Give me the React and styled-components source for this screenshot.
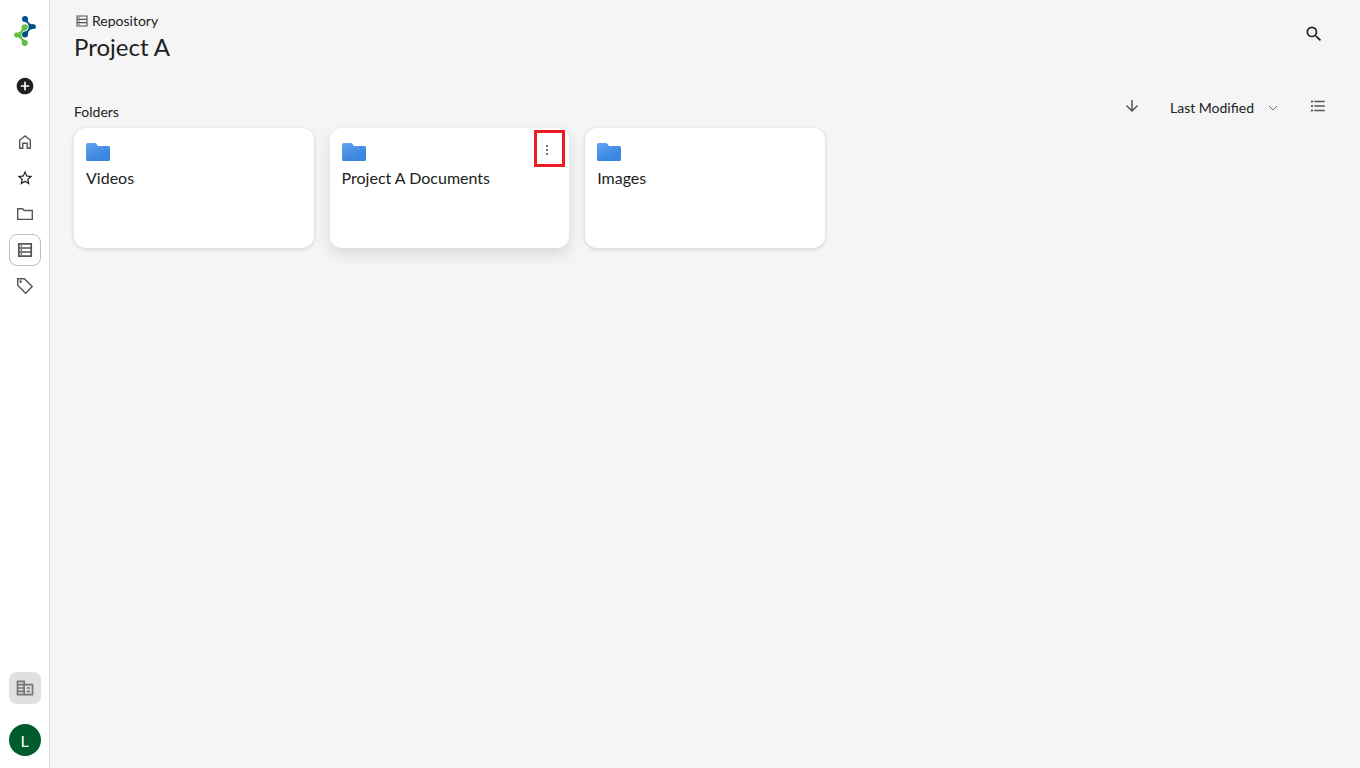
import styled, { createGlobalStyle, ThemeProvider } from "styled-components"
import {
  MdAddCircle,
  MdArrowDownward,
  MdCorporateFare,
  MdFormatListBulleted,
  MdSearch,
  MdStarBorder,
} from "react-icons/md"

const folders = [
  { id: "videos", name: "Videos" },
  { id: "documents", name: "Project A Documents", active: true },
  { id: "images", name: "Images" },
]

const theme = {
  bg: "#f5f5f5",
  surface: "#ffffff",
  text: "#212121",
  icon: "#555555",
  muted: "#757575",
  border: "#e0e0e0",
  highlight: "#ed1c24",
  avatar: "#005c2a",
}

const GlobalStyle = createGlobalStyle`
  * {
    box-sizing: border-box;
  }

  body {
    margin: 0;
    font-family: Lato, "Open Sans", sans-serif;
    color: #212121;
  }
`

const Logo = () => (
  <svg width="24" height="32" viewBox="0 0 24 32" aria-hidden="true">
    <g fill="#62c044">
      <path d="M8.7 12 C9 15.5 7.3 17.6 3.5 17.6 V22.4 C7 22.2 9.2 24.5 9 28.5 L13 25.5 C10 24.5 8.6 22.5 8.4 20 C8.4 17.5 10 15.2 14 14.5 Z" />
      <circle cx="11.7" cy="12.3" r="3.1" />
      <circle cx="3.4" cy="20" r="2.4" />
      <circle cx="11.8" cy="28" r="3" />
    </g>
    <g fill="#00508a">
      <path d="M14.6 3.5 C14.4 7.4 17 9.5 20.6 9.3 V14.1 C17 14.1 14.9 16.2 15 20 L11 17 C14 16.3 15.7 14.5 15.7 12 C15.7 9 14 7.3 10.5 6.3 Z" />
      <circle cx="12" cy="4" r="3" />
      <circle cx="20.6" cy="11.7" r="2.4" />
      <circle cx="12" cy="19.4" r="3" />
    </g>
  </svg>
)

const HomeIcon = () => (
  <LineIcon viewBox="0 0 20 20">
    <path d="M10 4 L4.7 8 V16.3 H7.8 V11.3 H12.2 V16.3 H15.3 V8 Z" />
  </LineIcon>
)

const FolderLineIcon = () => (
  <LineIcon viewBox="0 0 20 20">
    <path d="M2.7 4.7 H7.6 L9.2 6.5 H17.3 V15.4 H2.7 Z" />
  </LineIcon>
)

const RepositoryIcon = ({ $size, $weight }) => (
  <LineIcon viewBox="0 0 20 20" $size={$size} $weight={$weight}>
    <path d="M3.8 3.8 H16.2 V16.2 H3.8 Z M3.8 8 H16.2 M3.8 12 H16.2" />
    <path d="M5.6 6 H7.2 M5.6 10 H7.2 M5.6 14 H7.2" />
  </LineIcon>
)

const TagIcon = () => (
  <LineIcon viewBox="0 0 20 20">
    <path d="M2.7 2.7 H9.3 L17.2 10.6 L10.6 17.2 L2.7 9.3 Z" />
    <circle cx="5.6" cy="5.6" r="0.6" />
  </LineIcon>
)

const FolderIcon = () => (
  <svg width="24" height="24" viewBox="0 0 24 24" aria-hidden="true">
    <defs>
      <linearGradient id="folder" x1="0" y1="0" x2="0.6" y2="1">
        <stop offset="0" stopColor="#65a3f0" />
        <stop offset="0.7" stopColor="#3f8be4" />
        <stop offset="1" stopColor="#3a85df" />
      </linearGradient>
    </defs>
    <path
      fill="url(#folder)"
      d="M1.5 3 H8.8 Q9.6 3 10.2 3.7 L12 6 H22.5 Q24 6 24 7.5 V19.5 Q24 21 22.5 21 H1.5 Q0 21 0 19.5 V4.5 Q0 3 1.5 3 Z"
    />
  </svg>
)

const navItems = [
  { label: "Home", icon: <HomeIcon /> },
  { label: "Favorites", icon: <MdStarBorder size={18} /> },
  { label: "Files", icon: <FolderLineIcon /> },
  { label: "Repository", icon: <RepositoryIcon $weight={1.7} />, selected: true },
  { label: "Tags", icon: <TagIcon /> },
]

function App() {
  return (
    <ThemeProvider theme={theme}>
      <GlobalStyle />
      <Wrapper>
        <Sidebar>
          <LogoLink href="#" aria-label="Start">
            <Logo />
          </LogoLink>
          <AddButton aria-label="Add">
            <MdAddCircle size={20} />
          </AddButton>
          <Nav>
            {navItems.map((item) => (
              <NavLink
                key={item.label}
                href="#"
                aria-label={item.label}
                $selected={item.selected}
              >
                {item.icon}
              </NavLink>
            ))}
          </Nav>
          <SidebarFooter>
            <CompanyButton aria-label="Company">
              <MdCorporateFare size={20} />
            </CompanyButton>
            <Avatar aria-label="Account">L</Avatar>
          </SidebarFooter>
        </Sidebar>
        <Main>
          <Header>
            <div>
              <Breadcrumb href="#">
                <RepositoryIcon $size={16} />
                Repository
              </Breadcrumb>
              <PageTitle>Project A</PageTitle>
            </div>
            <SearchButton aria-label="Search">
              <MdSearch size={20} />
            </SearchButton>
          </Header>
          <Toolbar>
            <SectionTitle>Folders</SectionTitle>
            <Controls>
              <ToolButton aria-label="Sort direction">
                <MdArrowDownward size={18} />
              </ToolButton>
              <SortField>
                <SortSelect aria-label="Sort by">
                  <option>Last Modified</option>
                </SortSelect>
                <Chevron viewBox="0 0 10 6">
                  <path d="M1 1 L5 5 L9 1" />
                </Chevron>
              </SortField>
              <ToolButton aria-label="List view">
                <MdFormatListBulleted size={18} />
              </ToolButton>
            </Controls>
          </Toolbar>
          <FolderGrid>
            {folders.map((f) => (
              <Card key={f.id} $active={f.active}>
                <CardTop>
                  <FolderIcon />
                  {f.active && (
                    <MenuButton aria-label="More">
                      <Dots viewBox="0 0 20 20">
                        <path d="M9 5h2v2H9z M9 9h2v2H9z M9 13h2v2H9z" />
                      </Dots>
                      <Highlight />
                    </MenuButton>
                  )}
                </CardTop>
                <CardTitle>{f.name}</CardTitle>
              </Card>
            ))}
          </FolderGrid>
        </Main>
      </Wrapper>
    </ThemeProvider>
  )
}

export default App

const Wrapper = styled.div`
  display: flex;
  min-height: 100vh;
  background: ${({ theme }) => theme.bg};
`

const Sidebar = styled.aside`
  display: flex;
  flex-direction: column;
  align-items: center;
  width: 50px;
  padding: 15px 0 12px;
  background: ${({ theme }) => theme.surface};
  border-right: 1px solid ${({ theme }) => theme.border};
`

const LogoLink = styled.a`
  display: flex;
`

const IconButton = styled.button`
  display: flex;
  align-items: center;
  justify-content: center;
  flex: none;
  padding: 0;
  border: none;
  background: none;
  color: ${({ theme }) => theme.text};
  font-family: inherit;
  cursor: pointer;
`

const AddButton = styled(IconButton)`
  width: 32px;
  height: 32px;
  margin: 23px 0 24px;
`

const Nav = styled.nav`
  display: flex;
  flex-direction: column;
  gap: 4px;
`

const NavLink = styled.a`
  display: flex;
  align-items: center;
  justify-content: center;
  width: 32px;
  height: 32px;
  border: 1px solid ${({ $selected }) => ($selected ? "#bdbdbd" : "transparent")};
  border-radius: 8px;
  color: ${({ theme }) => theme.text};
`

const LineIcon = styled.svg`
  width: ${({ $size }) => $size || 20}px;
  height: ${({ $size }) => $size || 20}px;
  fill: none;
  stroke: ${({ theme }) => theme.icon};
  stroke-width: ${({ $weight }) => $weight || 1.4};
`

const SidebarFooter = styled.div`
  display: flex;
  flex-direction: column;
  gap: 20px;
  margin-top: auto;
`

const CompanyButton = styled(IconButton)`
  width: 32px;
  height: 32px;
  border-radius: 8px;
  background: ${({ theme }) => theme.border};
  color: ${({ theme }) => theme.muted};
`

const Avatar = styled(IconButton)`
  width: 32px;
  height: 32px;
  border-radius: 50%;
  background: ${({ theme }) => theme.avatar};
  color: white;
  font-size: 16px;
`

const Main = styled.main`
  flex: 1;
  min-width: 0;
  padding: 12px 24px;
`

const Header = styled.header`
  display: flex;
  justify-content: space-between;
  align-items: flex-start;
`

const Breadcrumb = styled.a`
  display: flex;
  align-items: center;
  gap: 2px;
  height: 17px;
  color: ${({ theme }) => theme.text};
  font-size: 14px;
  line-height: 16px;
  text-decoration: none;
`

const PageTitle = styled.h1`
  margin: 2px 0 0;
  font-size: 24px;
  line-height: 32px;
  font-weight: 400;
`

const SearchButton = styled(IconButton)`
  width: 44px;
  height: 44px;
`

const Toolbar = styled.div`
  display: flex;
  justify-content: space-between;
  align-items: flex-end;
  margin-top: 29px;
  padding-bottom: 4px;
`

const SectionTitle = styled.h2`
  margin: 0;
  font-size: 14px;
  line-height: 24px;
  font-weight: 400;
`

const Controls = styled.div`
  display: flex;
  align-items: flex-start;
  height: 32px;
`

const ToolButton = styled(IconButton)`
  width: 36px;
  height: 28px;
  color: ${({ theme }) => theme.icon};
`

const SortField = styled.div`
  position: relative;
  display: flex;
  align-items: center;
  margin: 0 22px 0 20px;
  height: 32px;
`

const SortSelect = styled.select`
  appearance: none;
  padding: 0 24px 0 0;
  border: none;
  background: none;
  color: ${({ theme }) => theme.text};
  font-family: inherit;
  font-size: 14px;
  line-height: 20px;
`

const Chevron = styled.svg`
  position: absolute;
  right: 0;
  width: 10px;
  height: 6px;
  fill: none;
  stroke: ${({ theme }) => theme.muted};
  pointer-events: none;
`

const FolderGrid = styled.div`
  display: grid;
  grid-template-columns: repeat(auto-fill, minmax(220px, 1fr));
  gap: 16px;
`

const Card = styled.article`
  min-height: 120px;
  padding: 12px;
  border-radius: 12px;
  background: ${({ theme }) => theme.surface};
  box-shadow: ${({ $active }) =>
    $active
      ? "0 6px 16px rgba(0, 0, 0, 0.12)"
      : "0 1px 4px rgba(0, 0, 0, 0.16)"};
`

const CardTop = styled.div`
  display: flex;
  justify-content: space-between;
  align-items: flex-start;
`

const CardTitle = styled.h3`
  margin: 2px 0 0;
  font-size: 16px;
  line-height: 24px;
  font-weight: 400;
`

const MenuButton = styled(IconButton)`
  position: relative;
  width: 20px;
  height: 20px;
`

const Dots = styled.svg`
  width: 20px;
  height: 20px;
  fill: ${({ theme }) => theme.muted};
`

const Highlight = styled.span`
  position: absolute;
  top: -10px;
  left: -3px;
  width: 31px;
  height: 37px;
  border: 3px solid ${({ theme }) => theme.highlight};
  pointer-events: none;
`
